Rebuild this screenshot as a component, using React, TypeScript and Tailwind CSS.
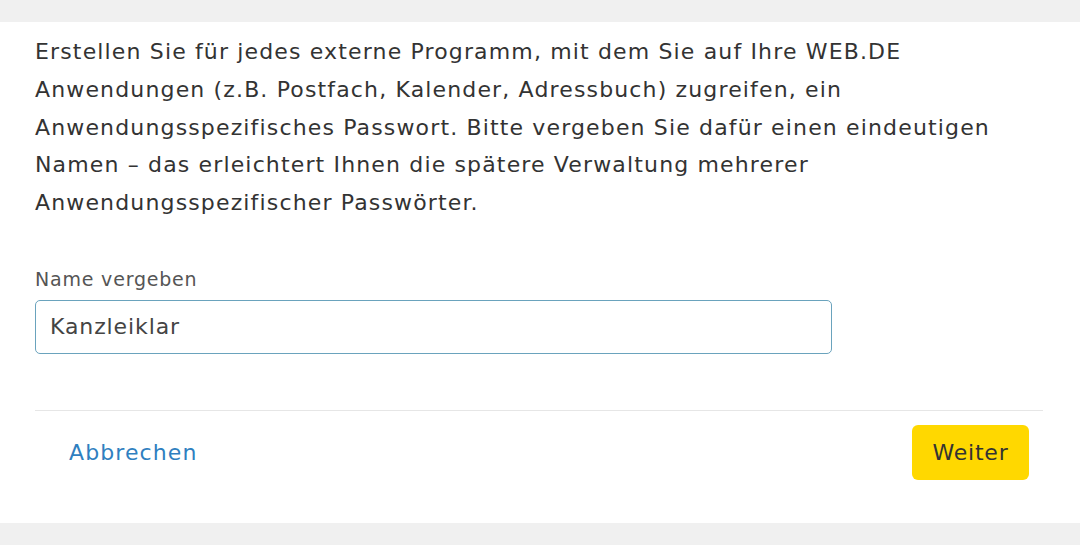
export default function App() {
  return (
    <div className="min-h-[545px] bg-[#f0f0f0] py-[22px] font-['DejaVu_Sans',Verdana,sans-serif]">
      <div className="bg-white pl-[35px] pr-[37px] pt-[11px]">
        <p className="text-[22px] leading-[37.75px] tracking-[1.15px] text-[#333333]">
          Erstellen Sie für jedes externe Programm, mit dem Sie auf Ihre WEB.DE
          <br />
          Anwendungen (z.B. Postfach, Kalender, Adressbuch) zugreifen, ein
          <br />
          Anwendungsspezifisches Passwort. Bitte vergeben Sie dafür einen eindeutigen
          <br />
          Namen – das erleichtert Ihnen die spätere Verwaltung mehrerer
          <br />
          Anwendungsspezifischer Passwörter.
        </p>

        <label className="mt-[43px] block text-[19px] leading-[28px] tracking-[0.8px] text-[#555555]">
          Name vergeben
        </label>
        <input
          type="text"
          defaultValue="Kanzleiklar"
          className="mt-[7px] block h-[54px] w-[797px] rounded-[5px] border border-[#6aa3bd] px-[14px] text-[22px] tracking-[0.9px] text-[#444444] outline-none"
        />

        <div className="mt-[56px] flex items-center justify-between border-t border-[#e6e6e6] pt-[14px] pb-[43px]">
          <button className="ml-[34px] text-[22px] tracking-[1.1px] text-[#2f7fc0]">Abbrechen</button>
          <button className="mr-[14px] h-[55px] w-[117px] rounded-[6px] bg-[#ffd800] text-[22px] tracking-[0.8px] text-[#333333]">
            Weiter
          </button>
        </div>
      </div>
    </div>
  )
}
